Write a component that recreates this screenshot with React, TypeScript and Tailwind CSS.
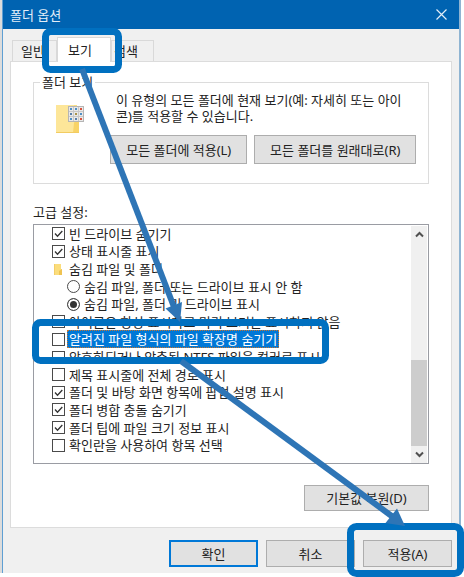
import React, { useState } from 'react';

type RowKind = 'check' | 'folder' | 'radio';

interface Row {
  kind: RowKind;
  label: string;
  on?: boolean;
  selected?: boolean;
}

const ROWS: Row[] = [
  { kind: 'check', label: '빈 드라이브 숨기기', on: true },
  { kind: 'check', label: '상태 표시줄 표시', on: true },
  { kind: 'folder', label: '숨김 파일 및 폴더' },
  { kind: 'radio', label: '숨김 파일, 폴더 또는 드라이브 표시 안 함' },
  { kind: 'radio', label: '숨김 파일, 폴더 및 드라이브 표시', on: true },
  { kind: 'check', label: '아이콘은 항상 표시하고 미리 보기는 표시하지 않음' },
  { kind: 'check', label: '알려진 파일 형식의 파일 확장명 숨기기', selected: true },
  { kind: 'check', label: '암호화되거나 압축된 NTFS 파일을 컬러로 표시' },
  { kind: 'check', label: '제목 표시줄에 전체 경로 표시' },
  { kind: 'check', label: '폴더 및 바탕 화면 항목에 팝업 설명 표시', on: true },
  { kind: 'check', label: '폴더 병합 충돌 숨기기', on: true },
  { kind: 'check', label: '폴더 팁에 파일 크기 정보 표시', on: true },
  { kind: 'check', label: '확인란을 사용하여 항목 선택' },
];

const FolderIcon = () => (
  <svg width="28" height="30" viewBox="0 0 28 30" className="shrink-0">
    <path d="M0 1h21v9h2v19H0z" fill="#fbdf82" />
    <path d="M0 1h18v28H0z" fill="#fde699" />
    <path d="M18 19l5-6v16h-6z" fill="#f8d367" />
    <path d="M0 28.5h23" stroke="#f2cc62" />
    <rect x="12.5" y="2.5" width="15" height="15" fill="#e9e9e9" stroke="#b5b5b5" />
    <path d="M17.5 3v14M22.5 3v14M13 7.5h14M13 12.5h14" stroke="#c8c8c8" />
    <path d="M14 4h2v2h-2zM24 9h2v2h-2zM14 14h2v2h-2zM19 4h2v2h-2z" fill="#4f8fc4" />
    <path d="M14 9h2v2h-2zM19 14h2v2h-2z" fill="#5a7fa8" />
    <path d="M24 4h2v2h-2zM24 14h2v2h-2z" fill="#d8523c" />
    <path d="M19 9h2v2h-2z" fill="#a8924a" />
  </svg>
);

const SmallFolderIcon = () => (
  <svg width="13" height="13" viewBox="0 0 13 13" className="shrink-0">
    <path d="M2 1h7v5h1v6H2z" fill="#fbdd7c" />
    <path d="M7 8l3-2v6H7z" fill="#efc352" />
    <path d="M2 1h1v11H2z" fill="#f3cd68" />
  </svg>
);

const CheckBox = ({ id, on }: { id: string; on: boolean }) => (
  <span className="grid size-[13px] shrink-0">
    <input
      id={id}
      type="checkbox"
      defaultChecked={on}
      className="peer col-start-1 row-start-1 size-[13px] appearance-none border border-[#4a4a4a] bg-white"
    />
    <svg
      viewBox="0 0 13 13"
      className="pointer-events-none invisible col-start-1 row-start-1 size-[13px] peer-checked:visible"
    >
      <path d="M3 6.5l2.5 2.7L10.3 4" fill="none" stroke="#333" strokeWidth="1.3" />
    </svg>
  </span>
);

const OptionRow = ({ row, index }: { row: Row; index: number }) => {
  const id = `option-${index}`;

  if (row.kind === 'folder') {
    return (
      <div className="flex min-h-0 flex-1 items-center gap-1 pl-[18px]">
        <SmallFolderIcon />
        <span>{row.label}</span>
      </div>
    );
  }

  if (row.kind === 'radio') {
    return (
      <div className="flex min-h-0 flex-1 items-center gap-1 pl-[33px]">
        <input
          id={id}
          type="radio"
          name="hidden-files"
          defaultChecked={row.on}
          className="size-[13px] shrink-0 appearance-none rounded-full border border-[#4a4a4a] bg-white checked:bg-[#333] checked:shadow-[inset_0_0_0_2px_white]"
        />
        <label htmlFor={id}>{row.label}</label>
      </div>
    );
  }

  return (
    <div className="flex min-h-0 flex-1 items-center gap-0.5 pl-[18px]">
      <CheckBox id={id} on={!!row.on} />
      <label
        htmlFor={id}
        className={
          row.selected
            ? 'border border-dotted border-[#c8742c] bg-[#0078d7] px-px text-white'
            : 'border border-transparent px-px'
        }
      >
        {row.label}
      </label>
    </div>
  );
};

const ScrollBar = () => (
  <div className="mt-px mr-px flex w-4 shrink-0 flex-col bg-[#f0f0f0]">
    <button type="button" aria-label="위로" className="flex h-[17px] items-center justify-center">
      <svg width="9" height="7" viewBox="0 0 9 7">
        <path d="M1 5.5l3.5-3.5L8 5.5" fill="none" stroke="#505050" strokeWidth="2" />
      </svg>
    </button>
    <div className="grow" />
    <div className="h-[86px] bg-[#cdcdcd]" />
    <button type="button" aria-label="아래로" className="flex h-[17px] items-center justify-center">
      <svg width="9" height="7" viewBox="0 0 9 7">
        <path d="M1 1.5l3.500 3.500L8 1.500" fill="none" stroke="#505050" strokeWidth="2" />
      </svg>
    </button>
  </div>
);

// Highlight boxes and arrows drawn over the dialog
const Annotations = () => (
  <svg
    width="464"
    height="577"
    viewBox="0 0 464 577"
    className="pointer-events-none absolute top-0 left-0"
  >
    <g fill="none" stroke="#0070c0" strokeWidth="7">
      <rect x="45.5" y="31.5" width="73" height="38" rx="5" />
      <rect x="35.5" y="322.5" width="290" height="38" rx="5" />
      <rect x="350.5" y="526.5" width="110" height="47" rx="6" />
    </g>
    <g stroke="#2e75b6" strokeWidth="6">
      <path d="M82 69L174 307" />
      <path d="M181 361L393 517" />
    </g>
    <path d="M165.500 308.500L182 302L180 322z" fill="#2e75b6" />
    <path d="M385.500 523L397 508.500L405 526z" fill="#2e75b6" />
  </svg>
);

const buttonClass = 'border border-[#adadad] bg-[#e1e1e1] whitespace-nowrap';

const App = () => {
  const [tab, setTab] = useState('보기');

  return (
    <div className="relative bg-white pr-[3px] pb-1 font-['Noto_Sans','Noto_Sans_CJK_KR',sans-serif] text-[13px] leading-4 text-[#222]">
      <div className="border-x-2 border-l-[#dcdcdc] border-r-[#8fb4d2]">
        <div className="border-l border-[#5f9fd3] bg-[#f0f0f0]">
          <header className="flex h-[29px] items-center justify-between bg-[#0063b1] pr-3 pl-[7px] text-[#e3eef8]">
            <h1>폴더 옵션</h1>
            <button type="button" aria-label="닫기">
              <svg width="11" height="11" viewBox="0 0 11 11">
                <path d="M.5.5l10 10M10.5.5l-10 10" stroke="#e3eef8" strokeWidth="1.2" />
              </svg>
            </button>
          </header>

          <main className="px-[7px] pt-2 pb-1.5">
            <div role="tablist" className="flex items-end pl-0.5">
              <button
                type="button"
                role="tab"
                aria-selected={tab === '일반'}
                onClick={() => setTab('일반')}
                className="h-[21px] w-[45px] border border-b-0 border-[#d9d9d9] pl-2 text-left"
              >
                일반
              </button>
              <button
                type="button"
                role="tab"
                aria-selected={tab === '보기'}
                onClick={() => setTab('보기')}
                className="relative -mb-px h-[25px] w-[54px] border border-b-0 border-[#d9d9d9] bg-white pr-2"
              >
                보기
              </button>
              <button
                type="button"
                role="tab"
                aria-selected={tab === '검색'}
                onClick={() => setTab('검색')}
                className="h-[21px] w-[43px] border border-b-0 border-[#d9d9d9] pl-0.5 text-left"
              >
                검색
              </button>
            </div>

            <section className="border border-[#dcdcdc] bg-white px-[22px] pt-3 pb-4">
              <fieldset className="border border-[#dcdcdc] pr-3 pb-[19px] pl-[22px]">
                <legend className="-ml-4 px-0.5">폴더 보기</legend>
                <div className="flex gap-[26px] pt-0.5">
                  <div className="pt-3">
                    <FolderIcon />
                  </div>
                  <div className="min-w-0 grow">
                    <div className="pl-1.5 whitespace-nowrap">
                      <p>이 유형의 모든 폴더에 현재 보기(예: 자세히 또는 아이</p>
                      <p>콘)를 적용할 수 있습니다.</p>
                    </div>
                    <div className="mt-[11px] grid grid-cols-[137fr_161fr] gap-[7px]">
                      <button type="button" className={`${buttonClass} h-[29px]`}>
                        모든 폴더에 적용(L)
                      </button>
                      <button type="button" className={`${buttonClass} h-[29px]`}>
                        모든 폴더를 원래대로(R)
                      </button>
                    </div>
                  </div>
                </div>
              </fieldset>

              <h2 className="mt-5">고급 설정:</h2>
              <div className="mt-1 flex h-60 border border-[#9a9ca3]">
                <div className="flex h-[229px] min-w-0 grow flex-col whitespace-nowrap">
                  {ROWS.map((row, index) => (
                    <OptionRow key={row.label} row={row} index={index} />
                  ))}
                </div>
                <ScrollBar />
              </div>

              <div className="mt-[21px] flex justify-end">
                <button type="button" className={`${buttonClass} h-[26px] w-[125px]`}>
                  기본값 복원(D)
                </button>
              </div>
            </section>

            <footer className="mt-3 flex justify-end gap-2">
              <button
                type="button"
                className="h-[27px] w-[89px] border-2 border-[#0078d7] bg-[#e1e1e1]"
              >
                확인
              </button>
              <button type="button" className={`${buttonClass} h-[27px] w-[89px]`}>
                취소
              </button>
              <button type="button" className={`${buttonClass} h-[27px] w-[89px]`}>
                적용(A)
              </button>
            </footer>
          </main>
        </div>
      </div>
      <Annotations />
    </div>
  );
};

export default App;
